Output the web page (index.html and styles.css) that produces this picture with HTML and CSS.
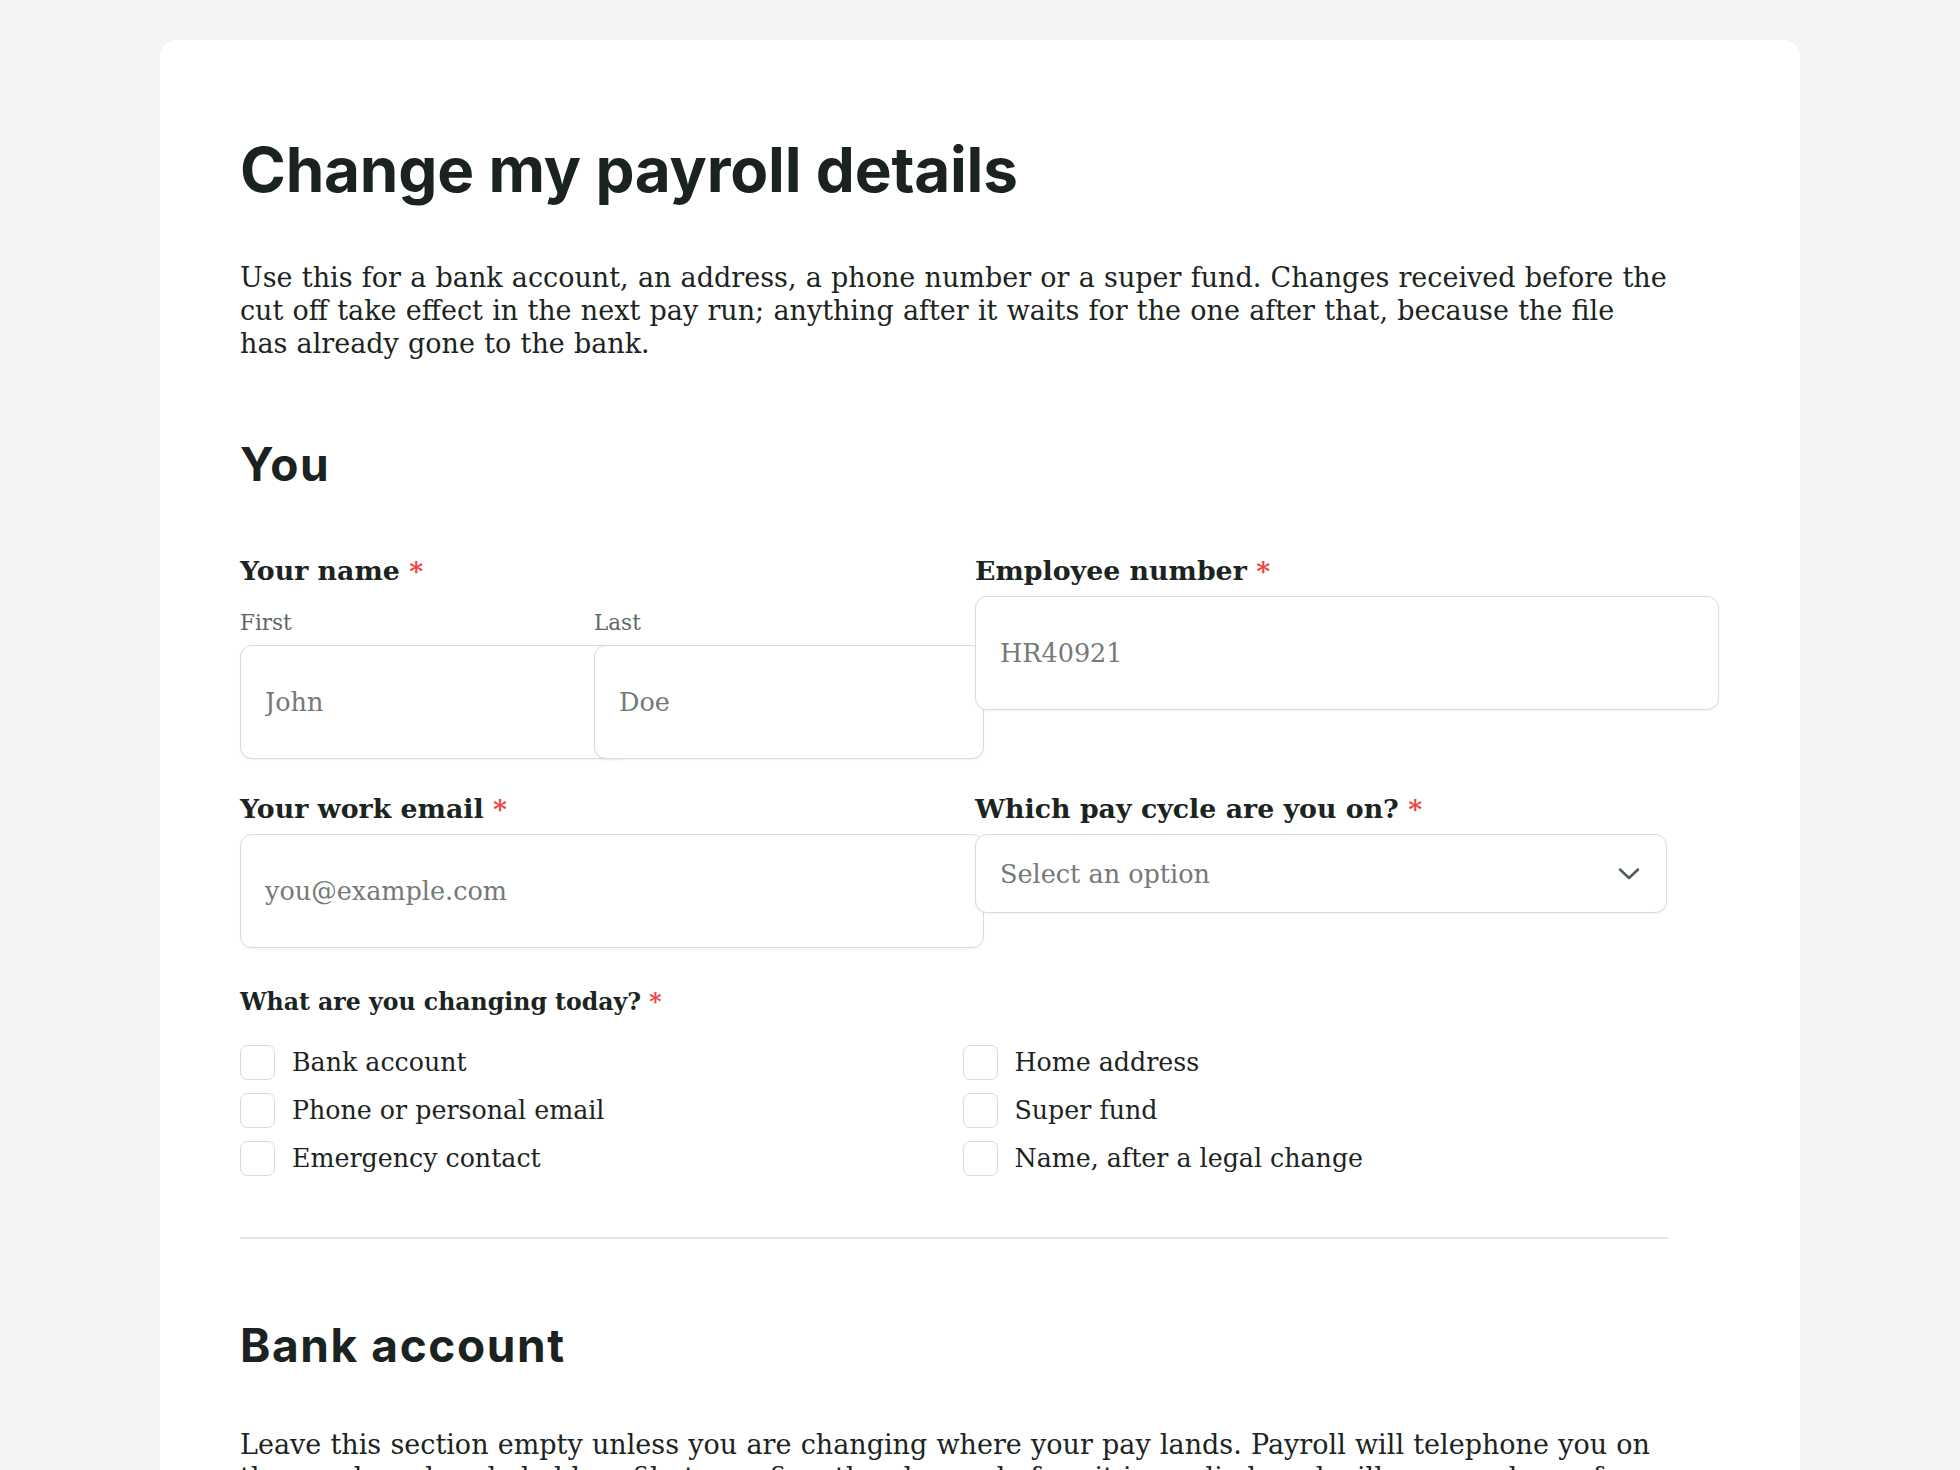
FILE: index.html
```html
<!DOCTYPE html>
<html lang="en">
<head>
<meta charset="utf-8">
<title>Change my payroll details</title>
<link rel="stylesheet" href="styles.css">
</head>
<body>
<main class="card">
  <div class="content">
    <h1 class="title">Change my payroll details</h1>
    <p class="intro">Use this for a bank account, an address, a phone number or a super fund. Changes received before the cut off take effect in the next pay run; anything after it waits for the one after that, because the file has already gone to the bank.</p>

    <h2 class="section-title first">You</h2>

    <div class="grid">
      <div class="field">
        <span class="label">Your name <span class="req">*</span></span>
        <div class="name-grid">
          <div class="name-part">
            <label class="sublabel" for="first">First</label>
            <input class="text-input" id="first" type="text" placeholder="John">
          </div>
          <div class="name-part">
            <label class="sublabel" for="last">Last</label>
            <input class="text-input" id="last" type="text" placeholder="Doe">
          </div>
        </div>
      </div>
      <div class="field">
        <label class="label" for="emp">Employee number <span class="req">*</span></label>
        <input class="text-input" id="emp" type="text" placeholder="HR40921">
      </div>
      <div class="field">
        <label class="label" for="email">Your work email <span class="req">*</span></label>
        <input class="text-input" id="email" type="email" placeholder="you@example.com">
      </div>
      <div class="field">
        <label class="label" for="cycle">Which pay cycle are you on? <span class="req">*</span></label>
        <div class="select-wrap">
          <select class="select" id="cycle">
            <option>Select an option</option>
            <option>Weekly</option>
            <option>Fortnightly</option>
            <option>Monthly</option>
          </select>
          <svg class="chevron" width="22" height="13" viewBox="0 0 22 13" aria-hidden="true"><path d="M2 2.5l9 8.5 9-8.5" fill="none" stroke="#4f5d58" stroke-width="2.5" stroke-linecap="round" stroke-linejoin="round"/></svg>
        </div>
      </div>
    </div>

    <div class="group">
      <div class="group-label">What are you changing today? <span class="req">*</span></div>
      <div class="checks">
        <label class="check"><input type="checkbox" class="box"><span>Bank account</span></label>
        <label class="check"><input type="checkbox" class="box"><span>Home address</span></label>
        <label class="check"><input type="checkbox" class="box"><span>Phone or personal email</span></label>
        <label class="check"><input type="checkbox" class="box"><span>Super fund</span></label>
        <label class="check"><input type="checkbox" class="box"><span>Emergency contact</span></label>
        <label class="check"><input type="checkbox" class="box"><span>Name, after a legal change</span></label>
      </div>
    </div>

    <hr class="divider">

    <h2 class="section-title">Bank account</h2>
    <p class="section-text">Leave this section empty unless you are changing where your pay lands. Payroll will telephone you on the number already held on file to confirm the change before it is applied, and will never ask you for a password.</p>
  </div>
</main>
</body>
</html>
```
FILE: styles.css
```css
html, body {
  margin: 0;
  padding: 0;
}
body {
  background: #f4f4f4;
  color: #1b2420;
  font-family: "DejaVu Serif", "Liberation Serif", serif;
  padding-top: 40px;
}
.card {
  box-sizing: border-box;
  width: 1640px;
  margin: 0 auto;
  background: #ffffff;
  border-radius: 16px 16px 0 0;
  padding: 93px 80px 80px;
  min-height: 1500px;
}
.content {
  width: 1428px;
}
.title {
  margin: 0;
  font-family: "Inter", "Noto Sans", sans-serif;
  font-weight: 700;
  font-size: 62px;
  line-height: 74px;
  color: #1a231f;
  letter-spacing: -0.2px;
}
.intro, .section-text {
  margin: 54px 0 0;
  font-size: 27px;
  line-height: 33px;
  word-spacing: 0.65px;
}
.section-title {
  margin: 78px 0 0;
  font-family: "Inter", "Noto Sans", sans-serif;
  font-weight: 700;
  font-size: 46px;
  line-height: 56px;
  color: #1a231f;
  letter-spacing: 1.6px;
}
.section-title.first {
  margin-top: 76px;
}
.section-text {
  margin-top: 55px;
}
.grid {
  margin-top: 62px;
  display: grid;
  grid-template-columns: 692px 692px;
  column-gap: 43px;
  row-gap: 33px;
  align-items: start;
}
.field {
  min-width: 0;
}
.label {
  display: block;
  font-weight: 700;
  font-size: 26.8px;
  line-height: 33px;
  margin-bottom: 9px;
}
.req {
  color: #ef4444;
}
.name-grid {
  margin-top: 22px;
  display: grid;
  grid-template-columns: 1fr 1fr;
  column-gap: 16px;
}
.name-part {
  min-width: 0;
}
.sublabel {
  display: block;
  font-size: 21.5px;
  line-height: 27px;
  color: #5c6a64;
  margin-bottom: 9px;
}
.text-input {
  display: block;
  box-sizing: content-box;
  width: 100%;
  height: 112px;
  padding: 0 26px 0 24px;
  margin: 0;
  border: 1px solid #d6ddda;
  border-radius: 12px;
  background: #ffffff;
  box-shadow: 0 1px 2px rgba(20, 30, 25, 0.06);
  font-family: "DejaVu Serif", "Liberation Serif", serif;
  font-size: 25.5px;
  color: #1b2420;
  outline: none;
}
.text-input::placeholder {
  color: #737a77;
  opacity: 1;
}
.select-wrap {
  position: relative;
}
.select {
  display: block;
  box-sizing: border-box;
  width: 100%;
  height: 79px;
  padding: 0 70px 0 24px;
  margin: 0;
  border: 1px solid #d6ddda;
  border-radius: 12px;
  background: #ffffff;
  box-shadow: 0 1px 2px rgba(20, 30, 25, 0.06);
  font-family: "DejaVu Serif", "Liberation Serif", serif;
  font-size: 25.5px;
  color: #737a77;
  -webkit-appearance: none;
  appearance: none;
  outline: none;
}
.chevron {
  position: absolute;
  right: 27px;
  top: 33px;
  pointer-events: none;
}
.group {
  margin-top: 39px;
}
.group-label {
  font-weight: 700;
  font-size: 23.6px;
  line-height: 30px;
}
.checks {
  margin-top: 28px;
  display: grid;
  grid-template-columns: 1fr 1fr;
  column-gap: 17px;
  row-gap: 13px;
}
.check {
  display: flex;
  align-items: center;
  gap: 17px;
  height: 35px;
  font-size: 25.3px;
  line-height: 33px;
}
.box {
  -webkit-appearance: none;
  appearance: none;
  flex: none;
  box-sizing: border-box;
  width: 35px;
  height: 35px;
  margin: 0;
  border: 1.5px solid #d6ddda;
  border-radius: 7px;
  background: #ffffff;
}
.divider {
  margin: 61px 0 0;
  border: 0;
  border-top: 2px solid #dfe4e2;
  height: 0;
}
```
